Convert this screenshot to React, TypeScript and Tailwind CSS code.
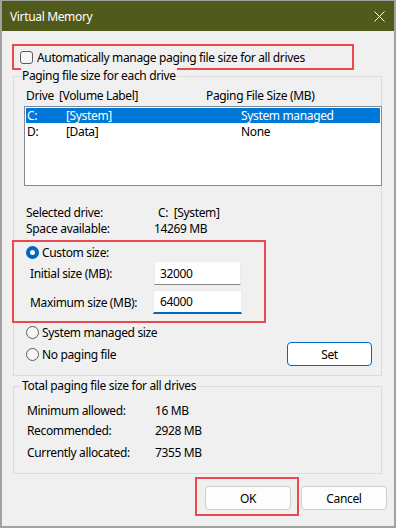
import React from 'react';

const FONT = "font-['Noto_Sans',sans-serif]";

function Radio({ checked }: { checked?: boolean }) {
	if (checked) {
		return (
			<span className="w-[13px] h-[13px] rounded-full bg-[#0067c0] flex items-center justify-center shrink-0">
				<span className="w-[5px] h-[5px] rounded-full bg-white" />
			</span>
		);
	}
	return <span className="w-[13px] h-[13px] rounded-full border border-[#5d5d5d] bg-[#f6f6f6] shrink-0" />;
}

function GroupBox({
	label,
	className,
	children,
}: {
	label: string;
	className: string;
	children: React.ReactNode;
}) {
	return (
		<div className={`relative ml-[1px] w-[369px] border border-[#dcdcdc] ${className}`}>
			<span className="absolute left-[7px] -top-[9px] px-[1px] bg-[#f0f0f0] leading-[16px]">{label}</span>
			{children}
		</div>
	);
}

function InfoRow({
	label,
	value,
	labelWidth,
	className = '',
}: {
	label: string;
	value: string;
	labelWidth: string;
	className?: string;
}) {
	return (
		<div className={`flex h-[16px] items-center ${className}`}>
			<span className={labelWidth}>{label}</span>
			<span className="whitespace-pre">{value}</span>
		</div>
	);
}

function DriveRow({ drive, label, size, selected }: { drive: string; label: string; size: string; selected?: boolean }) {
	return (
		<div
			className={`flex h-[15px] items-center pl-[1px] leading-[13px] ${selected ? 'bg-[#0078d7] text-white' : 'mt-[1px]'}`}
		>
			<span className="w-[39px]">{drive}</span>
			<span className="w-[175px]">{label}</span>
			<span>{size}</span>
		</div>
	);
}

export default function App() {
	return (
		<div
			className={`w-[396px] h-[528px] flex flex-col bg-[#f0f0f0] border-x-2 border-b-2 border-t border-[#a2a2a2] text-[12px] leading-[15px] tracking-[-0.35px] text-black overflow-hidden ${FONT}`}
		>
			{/* Title bar */}
			<div className="h-[30px] shrink-0 bg-[#4f5a1b] flex items-center justify-between pl-[8px] pr-[9px] text-white">
				<span>Virtual Memory</span>
				<svg width="11" height="11" viewBox="0 0 11 11" className="mt-[1px]">
					<path d="M0.5 0.5 L10.5 10.5 M10.5 0.5 L0.5 10.5" stroke="#ffffff" strokeWidth="1" />
				</svg>
			</div>

			<div className="pl-[10px] flex flex-col">
				{/* Auto manage */}
				<div className="mt-[13px] w-[342px] h-[26px] border-2 border-[#ea4a4f] flex items-center pl-[6px] gap-[4px]">
					<span className="w-[13px] h-[13px] rounded-[3px] border border-[#5d5d5d] bg-[#f6f6f6]" />
					<span>Automatically manage paging file size for all drives</span>
				</div>

				{/* Paging file size for each drive */}
				<GroupBox label="Paging file size for each drive" className="mt-[6px] h-[300px]">
					<div className="pl-[10px] pt-[10px] flex flex-col">
						<div className="flex h-[16px] items-center pl-[2px]">
							<span className="w-[33px]">Drive</span>
							<span className="w-[147px]">[Volume Label]</span>
							<span>Paging File Size (MB)</span>
						</div>
						<div className="mt-[3px] w-[358px] h-[80px] border border-[#828790] bg-white p-[1px]">
							<DriveRow drive="C:" label="[System]" size="System managed" selected />
							<DriveRow drive="D:" label="[Data]" size="None" />
						</div>

						<div className="mt-[18px] pl-[2px]">
							<InfoRow label="Selected drive:" value="C:  [System]" labelWidth="w-[132px]" />
							<InfoRow label="Space available:" value="14269 MB" labelWidth="w-[128px]" />
						</div>

						{/* Custom size */}
						<div className="mt-[4px] -ml-[12px] w-[254px] h-[83px] border-2 border-[#ea4a4f] flex flex-col pt-[2px]">
							<div className="flex h-[16px] items-center gap-[3px] pl-[12px]">
								<Radio checked />
								<span>Custom size:</span>
							</div>
							<div className="flex h-[24px] items-center mt-[1px] pl-[16px]">
								<span className="w-[124px]">Initial size (MB):</span>
								<div className="w-[87px] h-[24px] bg-white border border-[#ececec] border-b-[#868686] flex items-center pl-[5px]">
									32000
								</div>
							</div>
							<div className="flex h-[24px] items-center mt-[5px] pl-[16px]">
								<span className="w-[123px]">Maximum size (MB):</span>
								<div className="w-[89px] h-[24px] bg-white border border-[#ececec] border-b-2 border-b-[#0067c0] flex items-center pl-[6px]">
									64000
								</div>
							</div>
						</div>

						<div className="mt-[1px] flex h-[16px] items-center gap-[3px] pl-[2px]">
							<Radio />
							<span>System managed size</span>
						</div>
						<div className="mt-[2px] w-[348px] flex h-[24px] items-center pl-[2px]">
							<Radio />
							<span className="ml-[3px]">No paging file</span>
							<button className="ml-auto w-[85px] h-[24px] rounded-[4px] border border-[#0067c0] bg-white">
								Set
							</button>
						</div>
					</div>
				</GroupBox>

				{/* Totals */}
				<GroupBox label="Total paging file size for all drives" className="mt-[10px] h-[88px]">
					<div className="pl-[13px] pt-[15px] flex flex-col">
						<InfoRow label="Minimum allowed:" value="16 MB" labelWidth="w-[128px]" />
						<InfoRow label="Recommended:" value="2928 MB" labelWidth="w-[128px]" className="mt-[4px]" />
						<InfoRow label="Currently allocated:" value="7355 MB" labelWidth="w-[128px]" className="mt-[6px]" />
					</div>
				</GroupBox>

				{/* Buttons */}
				<div className="mt-[3px] flex items-start pl-[183px]">
					<div className="w-[104px] h-[39px] border-2 border-[#ea4a4f] pl-[8px] pt-[7px]">
						<button className="w-[86px] h-[24px] rounded-[4px] border border-[#d0d0d0] bg-[#fdfdfd]">OK</button>
					</div>
					<button className="ml-[2px] mt-[9px] w-[86px] h-[24px] rounded-[4px] border border-[#d0d0d0] bg-[#fdfdfd]">
						Cancel
					</button>
				</div>
			</div>
		</div>
	);
}
